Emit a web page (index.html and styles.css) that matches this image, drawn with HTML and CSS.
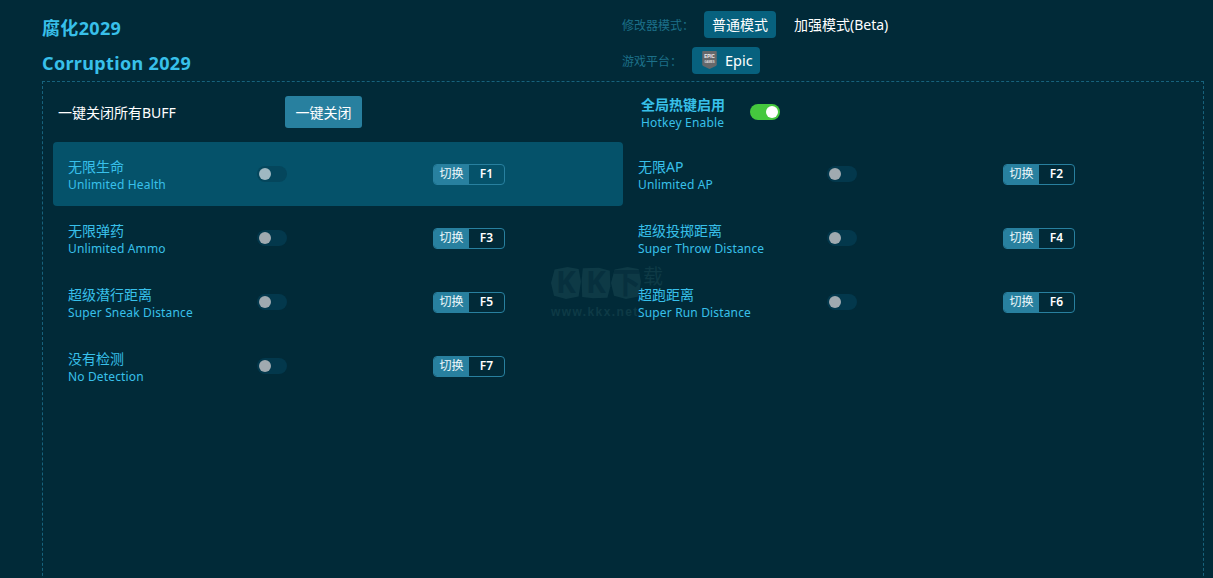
FILE: index.html
```html
<!DOCTYPE html>
<html lang="zh">
<head>
<meta charset="utf-8">
<title>Corruption 2029</title>
<link rel="stylesheet" href="styles.css">
</head>
<body>
<div class="page">
  <div class="watermark">
    <div class="wm-logo"><span class="wm-blob">K</span><span class="wm-blob wm-blob-b">K</span><span class="wm-blob">下</span><span class="wm-last">载</span></div>
    <div class="wm-url">www.kkx.net</div>
  </div>

  <header class="header">
    <div class="titles">
      <h1 class="title">腐化2029</h1>
      <h1 class="title">Corruption 2029</h1>
    </div>
    <div class="options">
      <div class="option-row">
        <span class="option-label">修改器模式：</span>
        <span class="pill pill-active">普通模式</span>
        <span class="pill">加强模式(Beta)</span>
      </div>
      <div class="option-row">
        <span class="option-label">游戏平台：</span>
        <span class="pill pill-active pill-epic">
          <svg class="epic-icon" viewBox="0 0 18 22" width="17" height="20">
            <path d="M2 1h14a1 1 0 0 1 1 1v14.500l-1 1-7 3.500-7-3.500-1-1V2a1 1 0 0 1 1-1z" fill="#66686b"/>
            <text x="9" y="8.500" class="epic-text">EPIC</text>
            <text x="9" y="14" class="epic-sub">GAMES</text>
          </svg>
          Epic
        </span>
      </div>
    </div>
  </header>

  <main class="panel">
    <div class="panel-top">
      <div class="all-off">
        <span class="all-off-label">一键关闭所有BUFF</span>
        <span class="all-off-btn">一键关闭</span>
      </div>
      <div class="hotkey-enable">
        <div class="hotkey-text">
          <div class="hotkey-cn">全局热键启用</div>
          <div class="hotkey-en">Hotkey Enable</div>
        </div>
        <span class="switch switch-on"></span>
      </div>
    </div>

    <div class="grid">
      <div class="row row-active">
        <div class="names"><div class="cn">无限生命</div><div class="en">Unlimited Health</div></div>
        <span class="switch"></span>
        <div class="key"><span class="key-action">切换</span><span class="key-name">F1</span></div>
      </div>
      <div class="row">
        <div class="names"><div class="cn">无限AP</div><div class="en">Unlimited AP</div></div>
        <span class="switch"></span>
        <div class="key"><span class="key-action">切换</span><span class="key-name">F2</span></div>
      </div>
      <div class="row">
        <div class="names"><div class="cn">无限弹药</div><div class="en">Unlimited Ammo</div></div>
        <span class="switch"></span>
        <div class="key"><span class="key-action">切换</span><span class="key-name">F3</span></div>
      </div>
      <div class="row">
        <div class="names"><div class="cn">超级投掷距离</div><div class="en">Super Throw Distance</div></div>
        <span class="switch"></span>
        <div class="key"><span class="key-action">切换</span><span class="key-name">F4</span></div>
      </div>
      <div class="row">
        <div class="names"><div class="cn">超级潜行距离</div><div class="en">Super Sneak Distance</div></div>
        <span class="switch"></span>
        <div class="key"><span class="key-action">切换</span><span class="key-name">F5</span></div>
      </div>
      <div class="row">
        <div class="names"><div class="cn">超跑距离</div><div class="en">Super Run Distance</div></div>
        <span class="switch"></span>
        <div class="key"><span class="key-action">切换</span><span class="key-name">F6</span></div>
      </div>
      <div class="row">
        <div class="names"><div class="cn">没有检测</div><div class="en">No Detection</div></div>
        <span class="switch"></span>
        <div class="key"><span class="key-action">切换</span><span class="key-name">F7</span></div>
      </div>
    </div>
  </main>
</div>
</body>
</html>
```
FILE: styles.css
```css
* { box-sizing: border-box; }
html, body { margin: 0; height: 100%; overflow: hidden; }
body {
  background: #012a38;
  color: #fff;
  font-family: "Noto Sans", "Noto Sans CJK SC", sans-serif;
}
.page { position: relative; height: 578px; padding-left: 42px; padding-right: 9px; overflow: hidden; }

.header { display: flex; height: 81px; }
.titles { width: 580px; padding-top: 14px; }
.title {
  margin: 0 0 7px;
  font-size: 18px;
  line-height: 28px;
  font-weight: 700;
  letter-spacing: 0.34px;
  color: #38c0ea;
}
.options { padding-top: 11px; display: flex; flex-direction: column; gap: 9px; }
.option-row { display: flex; align-items: center; height: 27px; }
.option-label { font-size: 12px; color: #1c7089; width: 82px; }
.option-row + .option-row .option-label { width: 70px; }
.pill {
  display: inline-flex;
  align-items: center;
  height: 27px;
  padding: 0 8px 2px;
  margin-right: 10px;
  border-radius: 4px;
  font-size: 14px;
}
.pill-active { background: #07617e; }
.pill-epic { padding: 0 7px 1px 9px; gap: 7px; font-size: 14.500px; }
.epic-icon { display: block; overflow: visible; }
.epic-text { font-size: 5px; font-weight: 700; fill: #f2f2f2; text-anchor: middle; font-family: "Liberation Sans", sans-serif; }
.epic-sub { font-size: 3px; font-weight: 700; fill: #e0e0e0; text-anchor: middle; font-family: "Liberation Sans", sans-serif; }

.panel {
  position: relative;
  height: 520px;
  border: 1px dashed #17627c;
  padding: 0 10px;
}
.panel-top { display: flex; height: 60px; align-items: center; }
.all-off { display: flex; align-items: center; width: 588px; padding-left: 5px; margin-top: -1px; }
.all-off-label { font-size: 14px; width: 227px; }
.all-off-btn {
  background: #28809f;
  border-radius: 3px;
  height: 32px;
  width: 77px;
  display: flex;
  align-items: center;
  justify-content: center;
  font-size: 14px;
}
.hotkey-enable { display: flex; align-items: center; }
.hotkey-text { width: 109px; padding-top: 3px; }
.hotkey-cn { font-size: 14px; font-weight: 700; line-height: 18px; color: #38c0ea; }
.hotkey-en { font-size: 12px; line-height: 17px; letter-spacing: 0.2px; color: #38c0ea; }

.grid { display: grid; grid-template-columns: 570px 570px; grid-auto-rows: 64px; }
.row { display: flex; align-items: center; padding-left: 15px; border-radius: 4px; }
.row-active { background: #05526a; }
.names { width: 189px; padding-top: 2px; }
.cn { font-size: 14px; line-height: 19px; color: #38c0ea; }
.en { font-size: 12px; line-height: 17px; letter-spacing: 0.15px; color: #38c0ea; }

.switch {
  position: relative;
  display: block;
  width: 30px;
  height: 16px;
  border-radius: 8px;
  background: #03384c;
}
.row-active .switch { background: #04465c; }
.switch::after {
  content: "";
  position: absolute;
  left: 2px;
  top: 2px;
  width: 12px;
  height: 12px;
  border-radius: 50%;
  background: #a0aab0;
}
.row-active .switch::after { background: #9fb8c2; }
.switch-on { background: #45c83e; }
.switch-on::after { left: auto; right: 2px; background: #fff; }

.key {
  display: flex;
  width: 72px;
  height: 21px;
  margin-left: 146px;
  border: 1px solid #28809f;
  border-radius: 4px;
  font-size: 12px;
  line-height: 18px;
  overflow: hidden;
}
.key-action { width: 35px; background: #28809f; text-align: center; color: #eef8fb; white-space: nowrap; }
.key-name { flex: 1; text-align: center; font-weight: 600; }

.watermark {
  position: absolute;
  left: 551px;
  top: 267px;
  white-space: nowrap;
  font-weight: 700;
  color: #0e3a46;
}
.wm-logo { display: flex; align-items: flex-start; height: 32px; }
.wm-blob {
  width: 30px;
  height: 32px;
  background: #0e3a46;
  color: #07303e;
  font-size: 30px;
  line-height: 30px;
  text-align: center;
  clip-path: polygon(12% 8%, 55% 0, 92% 6%, 100% 45%, 92% 92%, 50% 100%, 10% 90%, 0 50%);
}
.wm-blob-b { clip-path: polygon(6% 4%, 60% 2%, 96% 12%, 98% 60%, 88% 96%, 40% 98%, 4% 94%, 2% 42%); }
.wm-last { font-size: 20px; line-height: 18px; margin: 1px 0 0 2px; font-weight: 400; }
.wm-url { font-size: 12px; line-height: 14px; letter-spacing: 1.4px; font-family: "Liberation Sans", sans-serif; margin-top: 6px; }
```
